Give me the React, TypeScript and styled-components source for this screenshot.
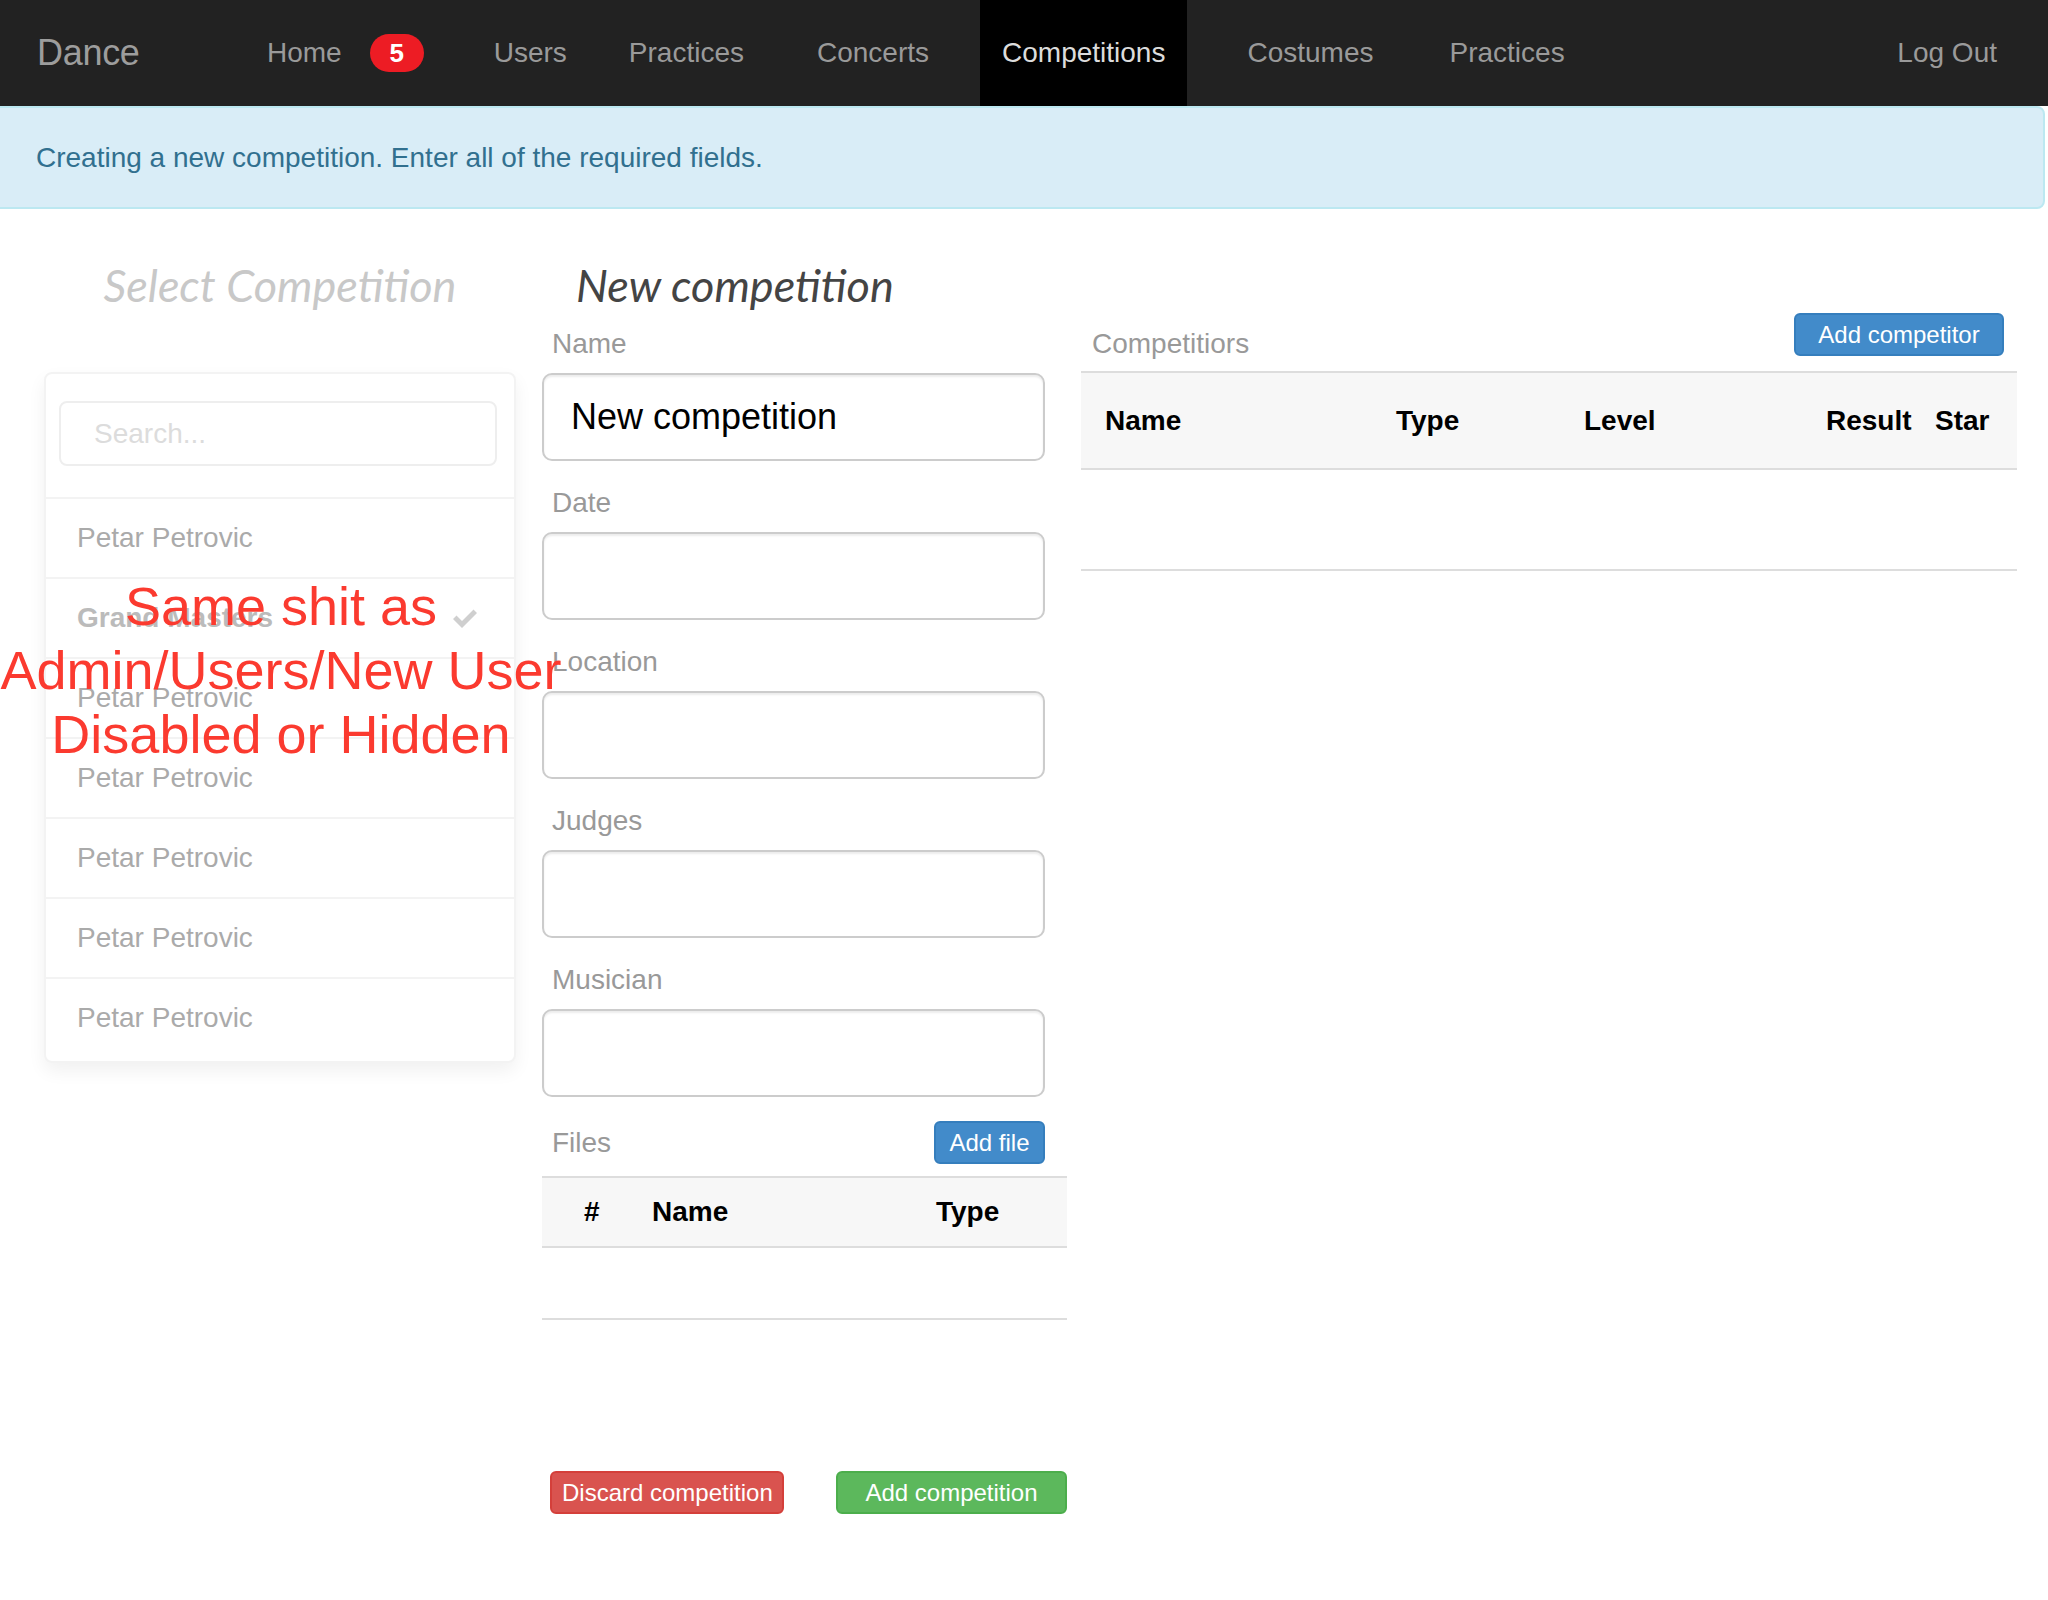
import React from "react";
import styled, { createGlobalStyle } from "styled-components";

const GlobalStyle = createGlobalStyle`
  html, body { margin: 0; padding: 0; background: #fff; }
  body { font-family: "Liberation Sans", Arial, Helvetica, sans-serif; color: #333; }
  * { box-sizing: border-box; }
`;

const Page = styled.div`
  position: relative;
  width: 2048px;
  min-height: 1600px;
  overflow: hidden;
`;

const Navbar = styled.nav`
  display: flex;
  align-items: stretch;
  height: 106px;
  background: #222;
  padding: 0 29px 0 37px;
`;

const Brand = styled.div`
  width: 195px;
  display: flex;
  align-items: center;
  font-size: 36px;
  color: #9d9d9d;
  letter-spacing: -0.3px;
`;

const NavList = styled.div`
  display: flex;
  align-items: stretch;
  flex: 1;
`;

const NavLink = styled.a<{ $active?: boolean; $push?: boolean; $shift?: number }>`
  display: flex;
  align-items: center;
  padding: 0 22px;
  margin: 0 13px 0 ${(p) => 13 + (p.$shift ?? 0)}px;
  ${(p) => (p.$push ? "margin: 0 0 0 auto;" : "")}
  font-size: 28px;
  color: ${(p) => (p.$active ? "#dcdcdc" : "#9a9a9a")};
  background: ${(p) => (p.$active ? "#000" : "transparent")};
  text-decoration: none;
  white-space: nowrap;
`;

const Badge = styled.span`
  display: inline-flex;
  align-items: center;
  justify-content: center;
  margin-left: 28px;
  width: 54px;
  height: 38px;
  border-radius: 19px;
  background: #ed1c24;
  color: #fff;
  font-weight: 700;
  font-size: 26px;
`;

const Alert = styled.div`
  margin: 0 3px 0 -10px;
  padding: 0 0 0 44px;
  height: 103px;
  display: flex;
  align-items: center;
  background: #d9edf7;
  border: 2px solid #bce8f1;
  border-radius: 0 8px 8px 0;
  color: #31708f;
  font-size: 28px;
`;

const Main = styled.div`
  display: flex;
  align-items: flex-start;
  padding: 41px 0 0 44px;
`;

const Column = styled.div<{ $width: number; $gap?: number; $top?: number }>`
  display: flex;
  flex-direction: column;
  width: ${(p) => p.$width}px;
  margin-left: ${(p) => p.$gap ?? 0}px;
  padding-top: ${(p) => p.$top ?? 0}px;
`;

const Heading = styled.h3<{ $muted?: boolean; $center?: boolean }>`
  margin: 0;
  height: 70px;
  line-height: 70px;
  font-family: Lato, "Open Sans", sans-serif;
  font-style: italic;
  font-weight: 400;
  font-size: 45px;
  color: ${(p) => (p.$muted ? "#c8c8c8" : "#444")};
  text-align: ${(p) => (p.$center ? "center" : "left")};
  padding-left: ${(p) => (p.$center ? "0" : "34px")};
  white-space: nowrap;
`;

const Panel = styled.div`
  margin-top: 52px;
  border: 2px solid #f3f3f3;
  border-radius: 8px;
  box-shadow: 0 8px 18px rgba(0, 0, 0, 0.06);
  background: #fff;
  padding-bottom: 4px;
`;

const SearchArea = styled.div`
  padding: 27px 17px 31px 13px;
`;

const SearchInput = styled.input`
  display: block;
  width: 100%;
  height: 65px;
  border: 2px solid #eee;
  border-radius: 8px;
  padding: 0 0 0 33px;
  font-family: "Liberation Sans", Arial, sans-serif;
  font-size: 28px;
  color: #555;
  outline: none;
  &::placeholder { color: #dcdcdc; }
`;

const ListRow = styled.div<{ $selected?: boolean }>`
  display: flex;
  align-items: center;
  justify-content: space-between;
  height: 80px;
  border-top: 2px solid #f3f3f3;
  padding: 0 37px 0 31px;
  font-size: 28px;
  font-weight: ${(p) => (p.$selected ? 700 : 400)};
  color: ${(p) => (p.$selected ? "#bbb" : "#aaa")};
`;

const Label = styled.label`
  display: block;
  height: 40px;
  line-height: 40px;
  font-size: 28px;
  color: #999;
  padding-left: 10px;
`;

const FormGroup = styled.div<{ $first?: boolean }>`
  width: 503px;
  margin-top: ${(p) => (p.$first ? "4px" : "0")};
  margin-bottom: 22px;
  & > label { margin-bottom: 9px; }
`;

const TextInput = styled.input`
  display: block;
  width: 100%;
  height: 88px;
  border: 2px solid #ccc;
  border-radius: 10px;
  box-shadow: inset 0 2px 2px rgba(0, 0, 0, 0.075);
  padding: 0 27px;
  font-family: "Liberation Sans", Arial, sans-serif;
  font-size: 36px;
  color: #000;
  outline: none;
`;

const SectionHeader = styled.div<{ $width?: number }>`
  display: flex;
  justify-content: space-between;
  align-items: center;
  width: ${(p) => (p.$width ? `${p.$width}px` : "100%")};
`;

const Button = styled.button<{ $variant: "primary" | "danger" | "success"; $width?: number }>`
  height: 43px;
  padding: 0 10px;
  width: ${(p) => (p.$width ? `${p.$width}px` : "auto")};
  border-radius: 6px;
  font-family: "Liberation Sans", Arial, sans-serif;
  font-size: 24px;
  color: #fff;
  cursor: pointer;
  white-space: nowrap;
  background: ${(p) =>
    p.$variant === "primary" ? "#428bca" : p.$variant === "danger" ? "#d9534f" : "#5cb85c"};
  border: 2px solid
    ${(p) => (p.$variant === "primary" ? "#357ebd" : p.$variant === "danger" ? "#d43f3a" : "#4cae4c")};
`;

const Table = styled.div<{ $mt: number }>`
  margin-top: ${(p) => p.$mt}px;
  width: 100%;
`;

const TableHead = styled.div<{ $cols: string; $height: number }>`
  display: grid;
  grid-template-columns: ${(p) => p.$cols};
  align-items: center;
  height: ${(p) => p.$height}px;
  background: #f7f7f7;
  border-top: 2px solid #ddd;
  border-bottom: 2px solid #ddd;
`;

const Th = styled.div<{ $pad: number }>`
  padding-left: ${(p) => p.$pad}px;
  font-size: 28px;
  font-weight: 700;
  color: #000;
  white-space: nowrap;
`;

const TableBody = styled.div<{ $height: number }>`
  height: ${(p) => p.$height}px;
  border-bottom: 2px solid #ddd;
`;

const Actions = styled.div`
  display: flex;
  gap: 52px;
  margin-top: 151px;
  padding-left: 8px;
`;

const Note = styled.div`
  position: absolute;
  left: 0;
  top: 574px;
  width: 562px;
  text-align: center;
  font-family: "Liberation Sans", Arial, sans-serif;
  font-size: 54px;
  line-height: 64px;
  color: #fb3a2f;
  white-space: nowrap;
  pointer-events: none;
`;

const CheckIcon = () => (
  <svg width="24" height="20" viewBox="0 0 24 20" aria-hidden="true">
    <path d="M0 11 L3.5 7.5 L9 13 L20.5 1.5 L24 5 L9 20 Z" fill="#cfcfcf" />
  </svg>
);

const navItems = [
  { label: "Users", shift: 0 },
  { label: "Practices", shift: -8 },
  { label: "Concerts", shift: 3 },
  { label: "Competitions", shift: 3, active: true },
  { label: "Costumes", shift: 12 },
  { label: "Practices", shift: 6 },
];

const people = [
  { name: "Petar Petrovic" },
  { name: "Grand Masters", selected: true },
  { name: "Petar Petrovic" },
  { name: "Petar Petrovic" },
  { name: "Petar Petrovic" },
  { name: "Petar Petrovic" },
  { name: "Petar Petrovic" },
];

const fields = ["Date", "Location", "Judges", "Musician"];

export default function App() {
  return (
    <Page>
      <GlobalStyle />
      <Navbar>
        <Brand>Dance</Brand>
        <NavList>
          <NavLink>
            Home<Badge>5</Badge>
          </NavLink>
          {navItems.map((n, i) => (
            <NavLink key={i} $active={n.active} $shift={n.shift}>
              {n.label}
            </NavLink>
          ))}
          <NavLink $push>Log Out</NavLink>
        </NavList>
      </Navbar>
      <Alert>Creating a new competition. Enter all of the required fields.</Alert>
      <Main>
        <Column $width={472}>
          <Heading $muted $center>
            Select Competition
          </Heading>
          <Panel>
            <SearchArea>
              <SearchInput placeholder="Search..." />
            </SearchArea>
            {people.map((p, i) => (
              <ListRow key={i} $selected={p.selected}>
                <span>{p.name}</span>
                {p.selected && <CheckIcon />}
              </ListRow>
            ))}
          </Panel>
        </Column>

        <Column $width={525} $gap={26}>
          <Heading>New competition</Heading>
          <FormGroup $first>
            <Label>Name</Label>
            <TextInput defaultValue="New competition" />
          </FormGroup>
          {fields.map((f) => (
            <FormGroup key={f}>
              <Label>{f}</Label>
              <TextInput />
            </FormGroup>
          ))}
          <SectionHeader $width={503} style={{ marginTop: 2 }}>
            <Label>Files</Label>
            <Button $variant="primary" $width={111}>
              Add file
            </Button>
          </SectionHeader>
          <Table $mt={12}>
            <TableHead $cols="86px 284px 1fr" $height={72}>
              <Th $pad={42}>#</Th>
              <Th $pad={24}>Name</Th>
              <Th $pad={24}>Type</Th>
            </TableHead>
            <TableBody $height={72} />
          </Table>
          <Actions>
            <Button $variant="danger" $width={234}>
              Discard competition
            </Button>
            <Button $variant="success" $width={234}>
              Add competition
            </Button>
          </Actions>
        </Column>

        <Column $width={936} $gap={14} $top={63}>
          <SectionHeader style={{ alignItems: "flex-start", paddingRight: 13 }}>
            <Label style={{ marginTop: 11, paddingLeft: 11 }}>Competitiors</Label>
            <Button $variant="primary" $width={210}>
              Add competitor
            </Button>
          </SectionHeader>
          <Table $mt={7}>
            <TableHead $cols="291px 188px 242px 109px 1fr" $height={99}>
              <Th $pad={24}>Name</Th>
              <Th $pad={24}>Type</Th>
              <Th $pad={24}>Level</Th>
              <Th $pad={24}>Result</Th>
              <Th $pad={24}>Star</Th>
            </TableHead>
            <TableBody $height={101} />
          </Table>
        </Column>
      </Main>
      <Note>
        Same shit as
        <br />
        Admin/Users/New User
        <br />
        Disabled or Hidden
      </Note>
    </Page>
  );
}
